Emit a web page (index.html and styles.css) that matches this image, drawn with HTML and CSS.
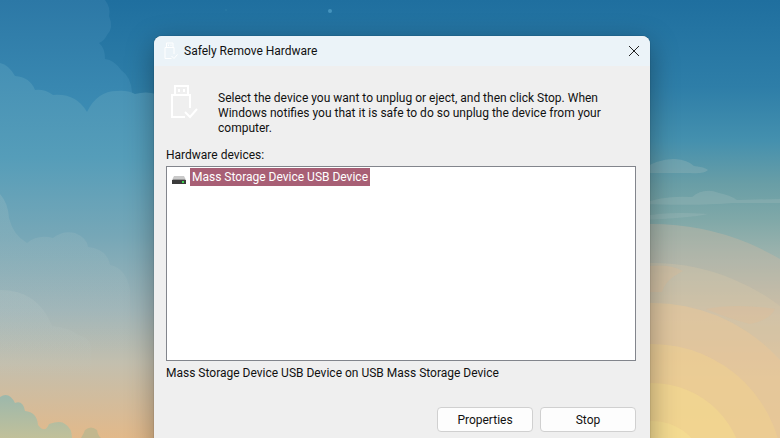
FILE: index.html
```
<!DOCTYPE html>
<html lang="en">
<head>
    <meta charset="UTF-8">
    <title>Safely Remove Hardware</title>
    <link rel="stylesheet" href="styles.css">
</head>
<body>
    <!-- sunset wallpaper -->
    <svg class="wallpaper" viewBox="0 0 780 438" preserveAspectRatio="none" aria-hidden="true">
        <defs>
            <linearGradient id="sky" x1="0" y1="0" x2="0" y2="1">
                <stop offset="0" stop-color="#1f6f9f"/>
                <stop offset="0.2" stop-color="#2e7ea8"/>
                <stop offset="0.32" stop-color="#4490ae"/>
                <stop offset="0.42" stop-color="#699ea6"/>
                <stop offset="0.5" stop-color="#7fa8a8"/>
                <stop offset="0.6" stop-color="#a3b5ae"/>
                <stop offset="0.72" stop-color="#ccc2a8"/>
                <stop offset="0.86" stop-color="#ebc995"/>
                <stop offset="1" stop-color="#f6cd86"/>
            </linearGradient>
            <linearGradient id="backCloud" x1="0" y1="0" x2="0" y2="1">
                <stop offset="0" stop-color="#2c78a6"/>
                <stop offset="1" stop-color="#3d8db4"/>
            </linearGradient>
            <linearGradient id="frontCloud" gradientUnits="userSpaceOnUse" x1="0" y1="63" x2="0" y2="438">
                <stop offset="0" stop-color="#4590b5"/>
                <stop offset="0.25" stop-color="#559db9"/>
                <stop offset="0.46" stop-color="#76a7b7"/>
                <stop offset="0.66" stop-color="#a0b5b8"/>
                <stop offset="0.8" stop-color="#c3bfae"/>
                <stop offset="1" stop-color="#e2b98a"/>
            </linearGradient>
            <linearGradient id="haze" x1="0" y1="0" x2="0" y2="1">
                <stop offset="0" stop-color="#c3d0cc" stop-opacity="0.18"/>
                <stop offset="0.8" stop-color="#c3d0cc" stop-opacity="0"/>
            </linearGradient>
            <linearGradient id="lowCloud" x1="0" y1="0" x2="0" y2="1">
                <stop offset="0" stop-color="#9cb8ac"/>
                <stop offset="1" stop-color="#c1c09a"/>
            </linearGradient>
        </defs>
        <rect width="780" height="438" fill="url(#sky)"/>
        <circle cx="330" cy="11" r="2" fill="#4d9cc4" fill-opacity="0.8"/>
        <circle cx="226" cy="10" r="1" fill="#2878a5"/>

        <path fill="url(#backCloud)" d="M0 0H105Q111 8 109 16Q114 28 107 35Q104 41 99 43Q105 48 105 59Q114 60 121 70Q131 77 132 92V120H0Z"/>
        <path fill="url(#frontCloud)" d="M0 63Q9 65 15 76Q30 77 35 90Q45 89 53 95Q76 93 87 112Q97 91 117 91Q127 90 135 94Q146 91 156 94H180V438H0Z"/>
        <path fill="url(#haze)" d="M0 194Q8 203 9 218Q13 235 27 243Q38 234 53 238Q63 230 75 233Q87 238 88 247Q107 249 110 265Q126 268 130 290V400H0Z"/>
        <path fill="url(#haze)" d="M0 290Q38 290 52 326Q70 328 78 335Q90 338 91 346V400H0Z"/>
        <path fill="url(#lowCloud)" d="M0 397Q9 391 15 403Q23 400 25 411Q37 412 38 425Q45 434 49 424Q61 420 65 424Q72 428 72 438H0Z"/>
        <path fill="#c2b78e" d="M81 438Q84 433 85 430Q91 425 97 430Q98 436 101 438Z"/>

        <g fill="#a3bdbd" fill-opacity="0.3">
            <path d="M640 170Q660 158 675 159Q688 160 694 166Q705 167 708 170Q704 174 690 173H640Z"/>
            <path d="M640 204Q665 195 692 197Q704 187 719 193Q730 195 737 200L780 199V203H733Q700 206 640 204Z"/>
            <path d="M640 217Q665 211 708 214Q690 218 640 220Z"/>
        </g>

        <g class="sun-rings">
            <circle cx="652" cy="475" r="251" fill="#d0b9a4" fill-opacity="0.35"/>
            <circle cx="652" cy="475" r="212" fill="#dccbaa" fill-opacity="0.3"/>
            <path fill="#e6bc91" fill-opacity="0.25" d="M640 268Q665 262 683 271Q665 280 662 292H640ZM706 309Q735 303 775 309Q770 320 750 324Q730 319 706 309Z"/>
            <circle cx="652" cy="475" r="172" fill="#ecc796" fill-opacity="0.45"/>
            <circle cx="652" cy="475" r="131" fill="#f2d38e" fill-opacity="0.45"/>
            <circle cx="652" cy="475" r="92" fill="#f5db8e" fill-opacity="0.5"/>
            <circle cx="652" cy="475" r="54" fill="#f7e292" fill-opacity="0.5"/>
        </g>
    </svg>

    <svg class="symbols" aria-hidden="true">
        <symbol id="usb" viewBox="0 0 28 36">
            <g fill="none" stroke="#fff" stroke-width="2">
                <path d="M5 11V2H18V11"/>
                <path d="M12 33H2V11H20V24"/>
                <path d="M12 33H15M15 28L20 33L27 25"/>
            </g>
            <path fill="#fff" d="M8 5H10V8H8ZM13 5H15V8H13Z"/>
        </symbol>
    </svg>

    <main class="dialog" role="dialog" aria-labelledby="dialogTitle">
        <header class="title-bar">
            <svg class="title-icon"><use href="#usb"/></svg>
            <h1 id="dialogTitle">Safely Remove Hardware</h1>
            <button class="close-button" type="button" aria-label="Close">
                <svg viewBox="0 0 12 12"><path d="M1 1L11 11M11 1L1 11"/></svg>
            </button>
        </header>

        <div class="content">
            <div class="intro">
                <svg class="intro-icon"><use href="#usb"/></svg>
                <p>Select the device you want to unplug or eject, and then click Stop. When Windows notifies you that it is safe to do so unplug the device from your computer.</p>
            </div>

            <h2 id="devicesLabel">Hardware devices:</h2>
            <ul class="device-list" role="listbox" aria-labelledby="devicesLabel" tabindex="0">
                <li role="option" aria-selected="true">
                    <svg class="drive-icon" viewBox="0 0 14 8">
                        <path fill="#c9c9c9" d="M2 0H12L14 4H0Z"/>
                        <rect y="4" width="14" height="4" fill="#3b3b3b"/>
                        <rect x="1" y="3" width="12" height="1" fill="#999"/>
                        <rect x="10" y="5" width="2" height="2" fill="#3fd34f"/>
                    </svg>
                    <span class="device-name">Mass Storage Device USB Device</span>
                </li>
            </ul>
            <p class="device-info">Mass Storage Device USB Device on USB Mass Storage Device</p>

            <div class="actions">
                <button type="button">Properties</button>
                <button type="button">Stop</button>
            </div>
        </div>
    </main>
</body>
</html>
```
FILE: styles.css
```
* {
    box-sizing: border-box;
}
body {
    margin: 0;
    padding: 36px 130px 0 154px;
    height: 100vh;
    overflow: hidden;
    font-family: Roboto, "Open Sans", sans-serif;
    font-size: 12px;
    line-height: 16px;
    color: #111;
}
h1, h2, p, ul {
    margin: 0;
    padding: 0;
    font-size: 12px;
    font-weight: normal;
}
.wallpaper {
    position: absolute;
    top: 0;
    left: 0;
    width: 100%;
    height: 100%;
    z-index: -1;
}
.symbols {
    display: none;
}
.dialog {
    background-color: #efefef;
    border-radius: 8px 8px 0 0;
    box-shadow: 0 0 1px rgba(0,0,0,0.6), 0 8px 28px rgba(0,0,0,0.35);
    overflow: hidden;
}
.title-bar {
    display: flex;
    align-items: center;
    height: 30px;
    padding-left: 10px;
    background-color: #ebf3f8;
}
.title-icon {
    width: 14px;
    height: 18px;
    margin-right: 6px;
}
.close-button {
    display: flex;
    align-items: center;
    justify-content: center;
    width: 32px;
    height: 30px;
    margin-left: auto;
    padding: 0;
    border: none;
    background: none;
}
.close-button svg {
    width: 12px;
    height: 12px;
    fill: none;
    stroke: #222;
}
.content {
    padding: 18px 14px 24px 12px;
}
.intro {
    display: flex;
    gap: 20px;
    padding: 0 24px 11px 4px;
}
.intro-icon {
    flex-shrink: 0;
    width: 28px;
    height: 36px;
}
.intro p {
    padding-top: 7px;
    line-height: 15px;
}
.device-list {
    height: 195px;
    margin-top: 3px;
    padding: 1px 5px;
    list-style: none;
    background-color: #fff;
    border: 1px solid #82858c;
}
.device-list li {
    display: flex;
    align-items: center;
    gap: 4px;
}
.drive-icon {
    width: 14px;
    height: 8px;
    margin-top: 6px;
}
.device-name {
    padding: 1px 2px;
    color: #fff;
    background-color: #a85f75;
}
.device-info {
    padding-top: 4px;
}
.actions {
    display: flex;
    justify-content: flex-end;
    gap: 7px;
    padding-top: 26px;
}
.actions button {
    width: 96px;
    height: 25px;
    font: inherit;
    color: #111;
    background-color: #fdfdfd;
    border: 1px solid #d0d0d0;
    border-radius: 4px;
}
```
